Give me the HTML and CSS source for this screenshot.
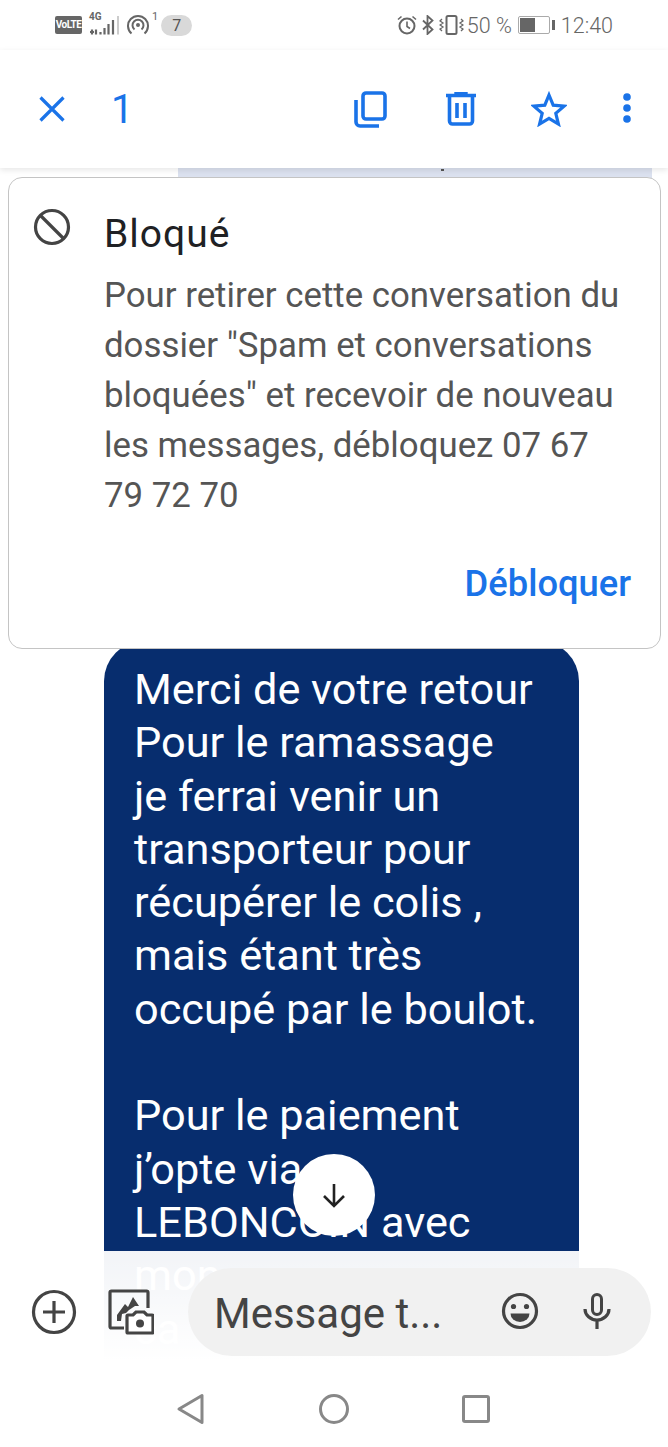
FILE: index.html
```html
<!DOCTYPE html>
<html>
    <head>
        <title>Messages</title>
        <link rel="stylesheet" href="styles.css">
    </head>
    <body>
        <div class="screen">
            <div class="status">
                <div class="status_left">
                    <span class="volte">VoLTE</span>
                    <svg class="signal" width="31" height="20" viewBox="0 0 31 20">
                        <path d="M1 17h4M3 14.500v5M7 14.500v5M11.500 17v2.500M15.500 13v6.500M19.500 9v10.500M24 5v14.500" fill="none" stroke="#666" stroke-width="2.200"/>
                        <path d="M28 1h2v18.500h-2z" fill="#ccc"/>
                    </svg>
                    <span class="net">4G</span>
                    <svg class="hotspot" width="22" height="22" viewBox="0 0 22 22">
                        <g fill="none" stroke="#666" stroke-width="2">
                            <path d="M4.500 19.500a10 10 0 1 1 13 0"/>
                            <path d="M7.500 15.500a5.500 5.500 0 1 1 7 0"/>
                        </g>
                        <circle cx="11" cy="11" r="2" fill="#666"/>
                    </svg>
                    <span class="sup">1</span>
                    <span class="notif">7</span>
                </div>
                <div class="status_right">
                    <svg width="20" height="20" viewBox="0 0 20 20">
                        <circle cx="10" cy="11" r="7.500" fill="none" stroke="#666" stroke-width="2"/>
                        <path d="M10 6.500v5l3 2M1 4.500l3.500-3M19 4.500l-3.500-3" fill="none" stroke="#666" stroke-width="1.600"/>
                    </svg>
                    <svg class="bt" width="12" height="20" viewBox="0 0 12 20">
                        <path d="M1 5.500l9.500 9-5 4.500v-18l5 4.500-9.500 9" fill="none" stroke="#666" stroke-width="1.800"/>
                    </svg>
                    <svg class="vibrate" width="25" height="20" viewBox="0 0 25 20">
                        <rect x="7.500" y="1" width="10" height="18" rx="1.500" fill="none" stroke="#666" stroke-width="2"/>
                        <path d="M3 4l-2 2 3 2-3 2 3 2-3 2 2 2M22 4l2 2-3 2 3 2-3 2 3 2-2 2" fill="none" stroke="#666" stroke-width="1.300"/>
                    </svg>
                    <span class="pct">50 %</span>
                    <span class="battery"><span class="battery_fill"></span></span>
                    <span class="battery_tip"></span>
                    <span class="time">12:40</span>
                </div>
            </div>

            <div class="toolbar">
                <svg class="close" width="28" height="28" viewBox="0 0 28 28">
                    <path d="M2.500 2.500l23 23M25.500 2.500l-23 23" stroke="#1a73e8" stroke-width="3.200" fill="none"/>
                </svg>
                <span class="count">1</span>
                <div class="actions">
                    <svg width="33" height="37" viewBox="0 0 33 37">
                        <rect x="9" y="2" width="22" height="26" rx="3" fill="none" stroke="#1a73e8" stroke-width="3.600"/>
                        <path d="M2 9v22a4 4 0 0 0 4 4h19" fill="none" stroke="#1a73e8" stroke-width="3.600"/>
                    </svg>
                    <svg width="30" height="34" viewBox="0 0 30 34">
                        <path d="M0 3.500h30M10 3.500V1h10v2.500" fill="none" stroke="#1a73e8" stroke-width="3.400"/>
                        <path d="M3.500 5v24a3 3 0 0 0 3 3h17a3 3 0 0 0 3-3V5" fill="none" stroke="#1a73e8" stroke-width="3.600"/>
                        <path d="M11 11v15M19 11v15" stroke="#1a73e8" stroke-width="3.600"/>
                    </svg>
                    <svg width="36" height="36" viewBox="0 0 36 36">
                        <path d="M18 4l4.200 10.200 11 .9-8.400 7.200 2.600 10.700-9.400-5.700-9.400 5.700 2.600-10.700-8.400-7.200 11-.9z" fill="none" stroke="#1a73e8" stroke-width="3.200"/>
                    </svg>
                    <svg width="8" height="32" viewBox="0 0 8 32">
                        <circle cx="4" cy="4" r="3.800" fill="#1a73e8"/>
                        <circle cx="4" cy="15" r="3.800" fill="#1a73e8"/>
                        <circle cx="4" cy="26" r="3.800" fill="#1a73e8"/>
                    </svg>
                </div>
            </div>

            <div class="thread">
                <div class="prev_bubble"></div>
                <div class="blocked">
                    <div class="blocked_row">
                        <svg class="blocked_icon" width="38" height="38" viewBox="0 0 38 38">
                            <circle cx="19" cy="19" r="16.500" fill="none" stroke="#444" stroke-width="3.200"/>
                            <path d="M7.500 7.500l23 23" stroke="#444" stroke-width="3.200"/>
                        </svg>
                        <div class="blocked_text">
                            <div class="blocked_title">Bloqué</div>
                            <p>Pour retirer cette conversation du dossier "Spam et conversations bloquées" et recevoir de nouveau les messages, débloquez 07 67 79 72 70</p>
                        </div>
                    </div>
                    <div class="unblock">Débloquer</div>
                </div>
                <div class="bubble">
                    Merci de votre retour<br>
                    Pour le ramassage<br>
                    je ferrai venir un<br>
                    transporteur pour<br>
                    récupérer le colis ,<br>
                    mais étant très<br>
                    occupé par le boulot.<br>
                    <br>
                    Pour le paiement<br>
                    j’opte via<br>
                    LEBONCOIN avec<br>
                    mon<br>
                    ca
                </div>
            </div>

            <div class="scroll_down">
                <svg width="26" height="26" viewBox="0 0 26 26">
                    <path d="M13 2v22M3 14l10 10 10-10" fill="none" stroke="#222" stroke-width="2.600"/>
                </svg>
            </div>

            <div class="bottom">
                <div class="composer">
                    <svg class="plus" width="46" height="46" viewBox="0 0 46 46">
                        <circle cx="23" cy="23" r="20.500" fill="none" stroke="#444" stroke-width="3.200"/>
                        <path d="M23 12v22M12 23h22" stroke="#444" stroke-width="3.200"/>
                    </svg>
                    <svg class="gallery" width="46" height="46" viewBox="0 0 46 46">
                        <path d="M16 39H3.500A1.500 1.500 0 0 1 2 37.500V3.500A1.500 1.500 0 0 1 3.500 2h35A1.500 1.500 0 0 1 40 3.500V19" fill="none" stroke="#444" stroke-width="3.200"/>
                        <path d="M9 32v-6l8-11 3 3 5-10 6 9h-4l-6 4-3 3-4 1-1 7z" fill="#444"/>
                        <path d="M20 26h5l3-3h8l3 3h5a1 1 0 0 1 1 1v16a1 1 0 0 1-1 1H20a1 1 0 0 1-1-1V27a1 1 0 0 1 1-1z" fill="#fff" stroke="#444" stroke-width="3.200"/>
                        <circle cx="32" cy="34.500" r="4" fill="#444"/>
                    </svg>
                    <div class="input">
                        <span class="placeholder">Message t...</span>
                        <svg class="emoji" width="38" height="38" viewBox="0 0 38 38">
                            <circle cx="19" cy="19" r="16.500" fill="none" stroke="#444" stroke-width="3.200"/>
                            <circle cx="12.500" cy="14.500" r="2.600" fill="#444"/>
                            <circle cx="25.500" cy="14.500" r="2.600" fill="#444"/>
                            <path d="M9.500 21.500h19a9.500 8.500 0 0 1-19 0z" fill="#444"/>
                        </svg>
                        <svg class="mic" width="28" height="36" viewBox="0 0 28 36">
                            <rect x="9.500" y="1.500" width="9" height="20" rx="4.500" fill="none" stroke="#444" stroke-width="3"/>
                            <path d="M2 16a12 11 0 0 0 24 0M14 27v9" fill="none" stroke="#444" stroke-width="3.200"/>
                        </svg>
                    </div>
                </div>
                <div class="nav">
                    <svg width="30" height="32" viewBox="0 0 30 32">
                        <path d="M26 2.500v27L3 16z" fill="none" stroke="#888" stroke-width="3" stroke-linejoin="round"/>
                    </svg>
                    <svg width="30" height="30" viewBox="0 0 30 30">
                        <circle cx="15" cy="15" r="13.500" fill="none" stroke="#888" stroke-width="3"/>
                    </svg>
                    <svg width="28" height="28" viewBox="0 0 28 28">
                        <rect x="1.500" y="1.500" width="25" height="25" rx="1.500" fill="none" stroke="#888" stroke-width="3"/>
                    </svg>
                </div>
            </div>
        </div>
    </body>
</html>
```

FILE: styles.css
```css
html, body {
    margin: 0;
    padding: 0;
    background: #fff;
}
.screen {
    position: relative;
    width: 668px;
    height: 1447px;
    overflow: hidden;
    font-family: Roboto, "Liberation Sans", sans-serif;
}

/* status bar */
.status {
    height: 50px;
    display: flex;
    justify-content: space-between;
    align-items: center;
    color: #666;
}
.status_left {
    position: relative;
    display: flex;
    align-items: center;
    padding-left: 55px;
}
.volte {
    width: 27px;
    height: 18px;
    line-height: 18px;
    border-radius: 2px;
    background: #666;
    color: #fff;
    font-size: 10px;
    font-weight: 700;
    text-align: center;
    letter-spacing: -0.5px;
}
.signal {
    margin-left: 7px;
}
.net {
    position: absolute;
    left: 89px;
    top: -3px;
    font-size: 10px;
    font-weight: 700;
}
.hotspot {
    margin-left: 7px;
}
.sup {
    margin: -18px 0 0 3px;
    font-size: 11px;
}
.notif {
    margin-left: 3px;
    width: 31px;
    height: 21px;
    line-height: 21px;
    border-radius: 11px;
    background: #d9d9d9;
    color: #555;
    font-size: 16px;
    text-align: center;
}
.status_right {
    display: flex;
    align-items: center;
    padding-right: 55px;
}
.bt {
    margin-left: 5px;
}
.vibrate {
    margin-left: 5px;
}
.pct {
    font-size: 21.500px;
    font-weight: 300;
    margin-left: 3px;
}
.battery {
    box-sizing: border-box;
    margin-left: 6px;
    width: 32px;
    height: 18px;
    border: 1px solid #aaa;
    border-radius: 2px;
    padding: 1px;
    display: block;
}
.battery_fill {
    display: block;
    width: 15px;
    height: 14px;
    background: #666;
}
.battery_tip {
    width: 3px;
    height: 10px;
    margin-left: 2px;
    background: #666;
}
.time {
    margin-left: 6px;
    font-size: 21.500px;
    font-weight: 300;
}

/* selection toolbar */
.toolbar {
    position: relative;
    z-index: 2;
    height: 118px;
    display: flex;
    align-items: center;
    background: #fff;
    box-shadow: 0 2px 6px rgba(0, 0, 0, 0.1);
}
.close {
    margin-left: 38px;
}
.count {
    margin-left: 45px;
    color: #1a73e8;
    font-size: 40px;
    font-weight: 400;
}
.actions {
    margin-left: auto;
    padding-right: 37px;
    display: flex;
    align-items: center;
}
.actions svg:nth-child(2) {
    margin-left: 59px;
}
.actions svg:nth-child(3) {
    margin-left: 55px;
}
.actions svg:nth-child(4) {
    margin-left: 56px;
}

/* conversation */
.thread {
    position: relative;
}
.prev_bubble {
    position: relative;
    height: 10px;
    margin: 0 16px 0 178px;
    background: #dbe1ef;
}
.prev_bubble::after {
    content: "";
    position: absolute;
    left: 263px;
    top: 1px;
    width: 3px;
    height: 2px;
    background: #555;
}
.blocked {
    position: relative;
    z-index: 1;
    box-sizing: border-box;
    height: 472px;
    margin: -1px 7px 0 8px;
    padding: 30px 0 0 24px;
    background: #fff;
    border: 1px solid #c4c4c4;
    border-radius: 14px;
}
.blocked_row {
    display: flex;
}
.blocked_icon {
    flex: none;
    margin-right: 33px;
}
.blocked_text {
    margin-top: 3px;
    width: 524px;
    color: #555;
    font-size: 34.800px;
    line-height: 50px;
}
.blocked_title {
    margin-top: -2px;
    color: #202124;
    font-size: 39px;
    line-height: 50px;
    letter-spacing: 1px;
}
.blocked_text p {
    margin: 11px 0 0;
}
.unblock {
    margin-top: 39px;
    padding-right: 29px;
    text-align: right;
    color: #1a73e8;
    font-size: 36.300px;
    font-weight: 500;
    line-height: 50px;
}
.bubble {
    box-sizing: border-box;
    width: 475px;
    margin-left: 104px;
    margin-top: -8px;
    padding: 22px 20px 0 30px;
    height: 760px;
    background: #072d6e;
    border-radius: 40px 40px 0 0;
    color: #fff;
    font-size: 43.300px;
    line-height: 53.300px;
}

.scroll_down {
    position: absolute;
    z-index: 3;
    left: 293px;
    top: 1154px;
    width: 82px;
    height: 82px;
    display: flex;
    align-items: center;
    justify-content: center;
    border-radius: 50%;
    background: #fff;
}

/* composer and nav stay over the thread */
.bottom {
    position: absolute;
    z-index: 2;
    left: 0;
    right: 0;
    top: 1251px;
    bottom: 0;
    background: linear-gradient(rgba(255, 255, 255, 0.95), #fff 110px);
}
.composer {
    display: flex;
    align-items: center;
    margin-top: 17px;
    height: 88px;
}
.plus {
    margin-left: 31px;
}
.gallery {
    margin-left: 31px;
}
.input {
    box-sizing: border-box;
    width: 463px;
    height: 88px;
    margin-left: 34px;
    padding: 0 40px 0 26px;
    display: flex;
    align-items: center;
    border-radius: 44px;
    background: #f1f1f1;
}
.placeholder {
    flex: 1;
    margin-top: 3px;
    color: #444;
    font-size: 42px;
}
.emoji {
    margin-top: -3px;
}
.mic {
    margin-left: 44px;
    margin-top: -2px;
}
.nav {
    margin-top: 37px;
    padding-left: 176px;
    display: flex;
    align-items: center;
}
.nav svg:nth-child(2) {
    margin-left: 113px;
}
.nav svg:nth-child(3) {
    margin-left: 113px;
}
```
